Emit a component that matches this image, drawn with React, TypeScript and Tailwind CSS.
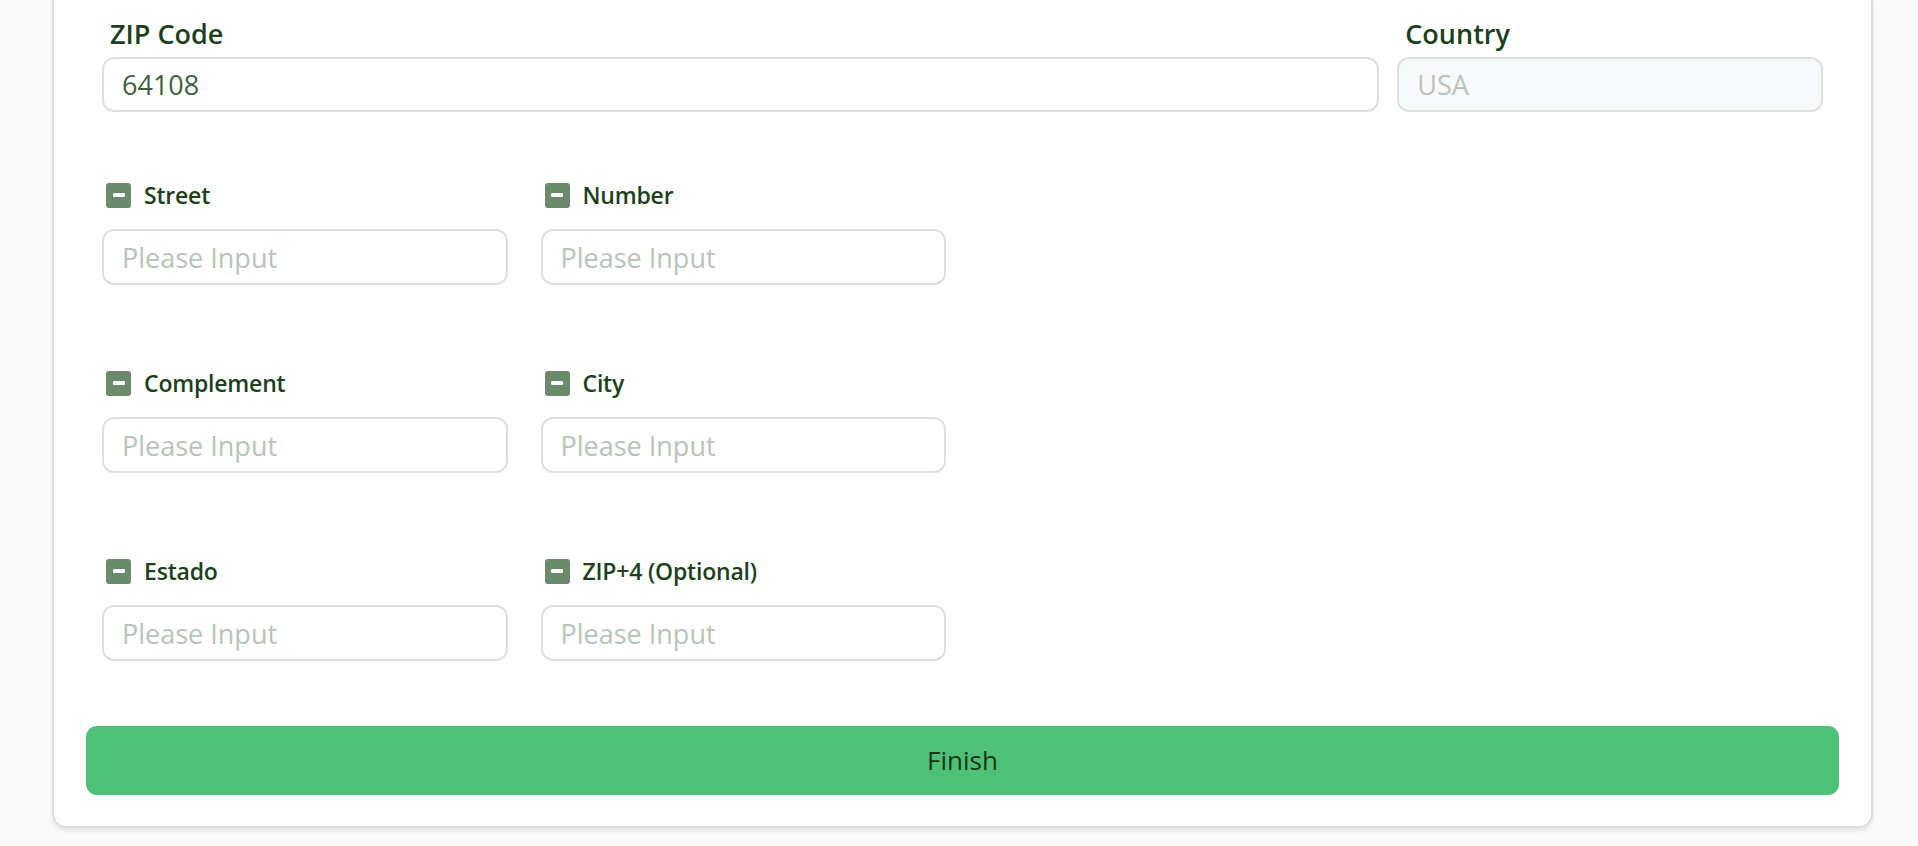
import React from "react";

const font = { fontFamily: '"Open Sans", "Noto Sans", sans-serif' };

function MinusIcon() {
  return (
    <span className="flex h-[25px] w-[25px] shrink-0 items-center justify-center rounded-[3px] bg-[#6b8a6b]">
      <span className="h-[4px] w-[12px] rounded-[1px] bg-white" />
    </span>
  );
}

function Field({ label }: { label: string }) {
  return (
    <div className="flex flex-col">
      <div className="flex h-[28px] items-center gap-[13px] pl-[4px]">
        <MinusIcon />
        <span className="text-[23px] font-semibold leading-none tracking-[-0.2px] text-[#1c3f1c]">{label}</span>
      </div>
      <input
        className="mt-[20px] h-[56px] w-full rounded-[12px] border-2 border-[#dce1dc] bg-white px-[18px] text-[27px] text-[#3f5f3f] outline-none placeholder:text-[#b8c4b8]"
        placeholder="Please Input"
        style={font}
      />
    </div>
  );
}

export default function App() {
  return (
    <div className="min-h-[846px] w-full bg-[#fafafa]" style={font}>
      <div className="ml-[52px] w-[1821px] rounded-b-[14px] border-2 border-t-0 border-[#dcdedc] bg-white px-[32px] pb-[31px] pt-[19px] shadow-[0_3px_4px_rgba(0,0,0,0.08)]">
        <div className="px-[16px]">
          <div className="flex gap-[18px]">
            <div className="flex flex-[3] flex-col">
              <label className="h-[30px] pl-[8px] text-[27px] font-semibold leading-[30px] text-[#1c3f1c]">ZIP Code</label>
              <input
                className="mt-[8px] h-[55px] w-full rounded-[12px] border-2 border-[#dce1dc] bg-white px-[18px] text-[27px] text-[#3f5f3f] outline-none"
                defaultValue="64108"
                style={font}
              />
            </div>
            <div className="flex flex-1 flex-col">
              <label className="h-[30px] pl-[8px] text-[27px] font-semibold leading-[30px] text-[#1c3f1c]">Country</label>
              <input
                className="mt-[8px] h-[55px] w-full rounded-[12px] border-2 border-[#dce1dc] bg-[#f8f9fb] px-[18px] text-[27px] text-[#b9c4b9] outline-none"
                defaultValue="USA"
                disabled
                style={font}
              />
            </div>
          </div>
          <div className="mt-[69px] grid grid-cols-4 gap-x-[33px] gap-y-[84px]">
            <Field label="Street" />
            <Field label="Number" />
            <div />
            <div />
            <Field label="Complement" />
            <Field label="City" />
            <div />
            <div />
            <Field label="Estado" />
            <Field label="ZIP+4 (Optional)" />
          </div>
        </div>
        <button className="mt-[65px] flex h-[69px] w-full items-center justify-center rounded-[11px] bg-[#4fc078] text-[26px] text-[#163816]">
          Finish
        </button>
      </div>
    </div>
  );
}
